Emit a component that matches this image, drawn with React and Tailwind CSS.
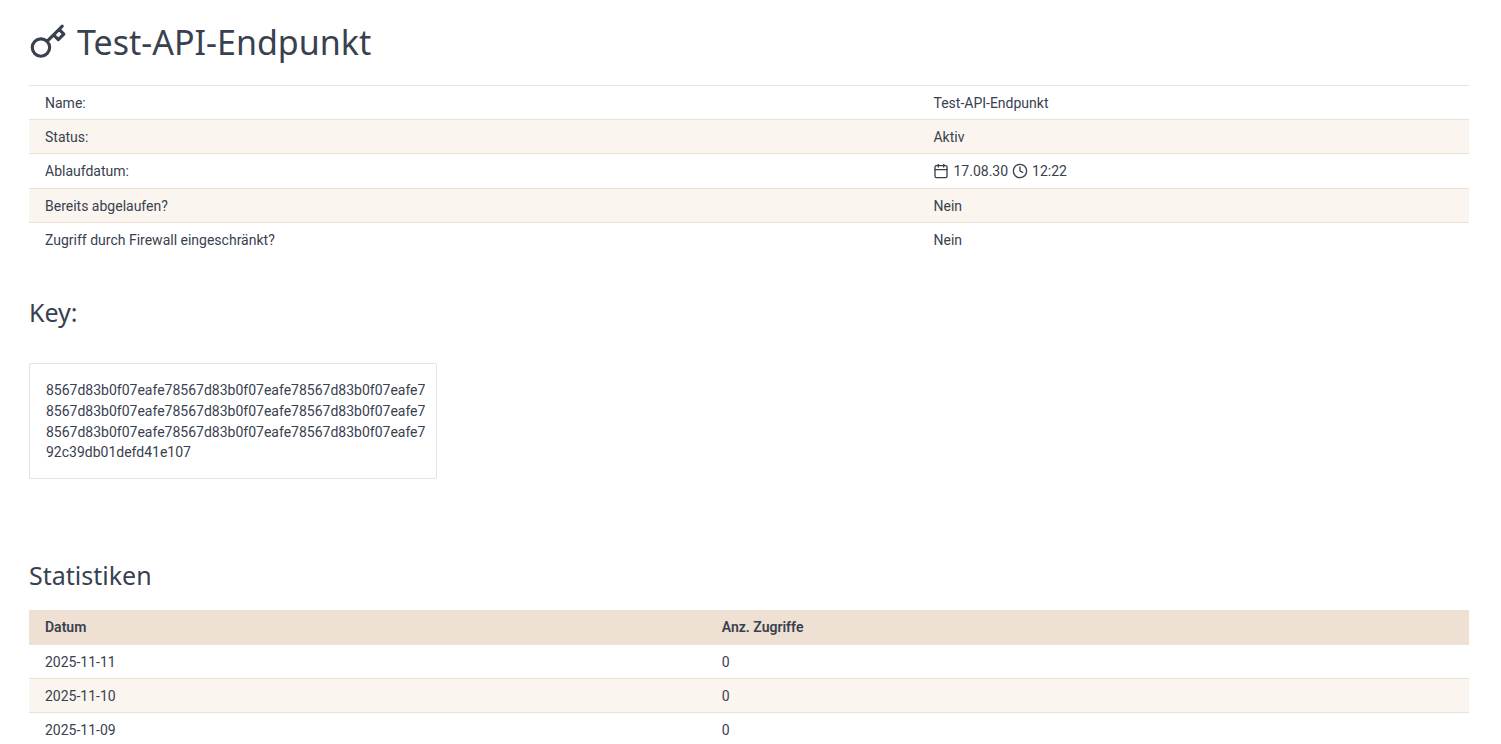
import React from "react";
import { FiCalendar, FiClock, FiKey } from "react-icons/fi";

const keyLines = [
  "8567d83b0f07eafe78567d83b0f07eafe78567d83b0f07eafe7",
  "8567d83b0f07eafe78567d83b0f07eafe78567d83b0f07eafe7",
  "8567d83b0f07eafe78567d83b0f07eafe78567d83b0f07eafe7",
  "92c39db01defd41e107",
];

const stats = [
  { date: "2025-11-11", count: 0 },
  { date: "2025-11-10", count: 0 },
  { date: "2025-11-09", count: 0 },
];

const ExpiryDate = () => (
  <span className="flex h-[34px] items-center gap-1">
    <FiCalendar size={16} />
    <span>17.08.30</span>
    <FiClock size={16} />
    <span>12:22</span>
  </span>
);

const details = [
  { label: "Name:", value: "Test-API-Endpunkt" },
  { label: "Status:", value: "Aktiv" },
  { label: "Ablaufdatum:", value: <ExpiryDate /> },
  { label: "Bereits abgelaufen?", value: "Nein" },
  { label: "Zugriff durch Firewall eingeschränkt?", value: "Nein" },
];

const App = () => {
  return (
    <main className="h-screen overflow-hidden bg-white pl-[29px] pr-8 pt-5 font-['Roboto',sans-serif] text-sm text-[#39414f]">
      <h1 className="flex items-center gap-2.5 font-['Noto_Sans',sans-serif] text-[34px] leading-[44px]">
        <FiKey size={38} />
        Test-API-Endpunkt
      </h1>

      <table className="mt-[21px] w-full table-fixed text-left">
        <tbody>
          {details.map((row) => (
            <tr
              key={row.label}
              className="h-[34px] border-t border-[#ede0d4] even:bg-[#faf5ef]"
            >
              <th scope="row" className="w-[61.7%] px-4 font-normal">
                {row.label}
              </th>
              <td className="px-4">{row.value}</td>
            </tr>
          ))}
        </tbody>
      </table>

      <h2 className="mt-[39px] font-['Noto_Sans',sans-serif] text-[25px] leading-8">
        Key:
      </h2>
      <div className="mt-[35px] w-fit rounded-xs border border-[#d9e4ee] pb-[17px] pl-4 pr-[11px] pt-4">
        <code className="font-['Roboto',sans-serif] leading-[21px]">
          {keyLines.map((line, i) => (
            <span key={i} className="block last:leading-[18px]">
              {line}
            </span>
          ))}
        </code>
      </div>

      <h2 className="mt-20 font-['Noto_Sans',sans-serif] text-[25px] leading-8">
        Statistiken
      </h2>
      <table className="mt-[19px] w-full text-left">
        <thead>
          <tr className="h-[35px] bg-[#eee0d3]">
            <th className="w-[47%] px-4 font-semibold">Datum</th>
            <th className="px-4 font-semibold">Anz. Zugriffe</th>
          </tr>
        </thead>
        <tbody>
          {stats.map((row) => (
            <tr
              key={row.date}
              className="h-[34px] border-t border-[#ede0d4] even:bg-[#faf5ef]"
            >
              <td className="px-4">{row.date}</td>
              <td className="px-4">{row.count}</td>
            </tr>
          ))}
        </tbody>
      </table>
    </main>
  );
};

export default App;
